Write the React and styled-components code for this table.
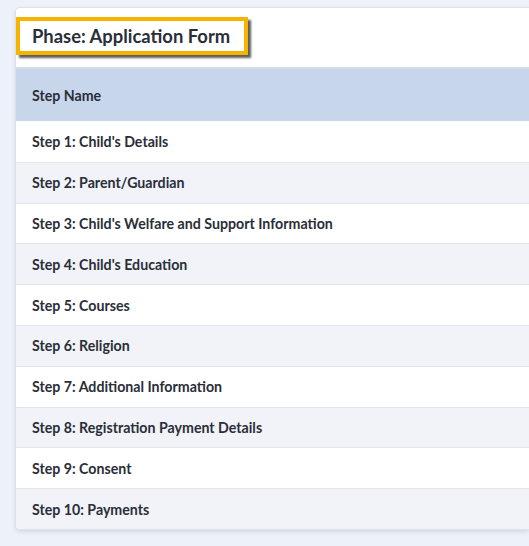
import styled, { createGlobalStyle } from "styled-components";

const Global = createGlobalStyle`
  html, body {
    margin: 0;
    padding: 0;
    background: #edf1f8;
    font-family: Lato, "Open Sans", "Liberation Sans", sans-serif;
    overflow: hidden;
  }
`;

const Page = styled.div`
  padding: 7px 0 0 15px;
  height: 546px;
  box-sizing: border-box;
`;

const Card = styled.div`
  background: #fff;
  border-radius: 5px 0 0 5px;
  border: 1px solid #dde2ea;
  border-right: none;
  box-shadow: 0 2px 4px rgba(40, 50, 70, 0.12);
  overflow: hidden;
`;

const Header = styled.div`
  height: 61px;
  display: flex;
  align-items: center;
  border-bottom: 2px solid #d8dee8;
  box-sizing: border-box;
`;

const Title = styled.h2`
  margin: 0 0 4px 0;
  padding: 4px 14px 4px 12px;
  border: 4px solid #f6b400;
  box-shadow: 3px 3px 2px rgba(40, 40, 40, 0.75);
  font-size: 18.4px;
  line-height: 22px;
  font-weight: 700;
  color: #2a2e38;
`;

const Table = styled.div`
  display: flex;
  flex-direction: column;
`;

const HeadRow = styled.div`
  height: 52px;
  display: flex;
  align-items: center;
  padding-left: 16px;
  background: #c8d6ec;
  font-size: 14.2px;
  font-weight: 700;
  color: #2a2e38;
`;

const Row = styled.div`
  height: 40.8px;
  display: flex;
  align-items: center;
  padding-left: 16px;
  box-sizing: border-box;
  background: ${(p) => (p.$alt ? "#f1f3f8" : "#fff")};
  border-top: ${(p) => (p.$first ? "none" : "1px solid #e1e5ec")};
  font-size: 14.2px;
  font-weight: 700;
  color: #2a2e38;
`;

const steps = [
  "Step 1: Child's Details",
  "Step 2: Parent/Guardian",
  "Step 3: Child's Welfare and Support Information",
  "Step 4: Child's Education",
  "Step 5: Courses",
  "Step 6: Religion",
  "Step 7: Additional Information",
  "Step 8: Registration Payment Details",
  "Step 9: Consent",
  "Step 10: Payments",
];

export default function App() {
  return (
    <Page>
      <Global />
      <Card>
        <Header>
          <Title>Phase: Application Form</Title>
        </Header>
        <Table>
          <HeadRow>Step Name</HeadRow>
          {steps.map((s, i) => (
            <Row key={s} $alt={i % 2 === 1} $first={i === 0}>
              {s}
            </Row>
          ))}
        </Table>
      </Card>
    </Page>
  );
}
